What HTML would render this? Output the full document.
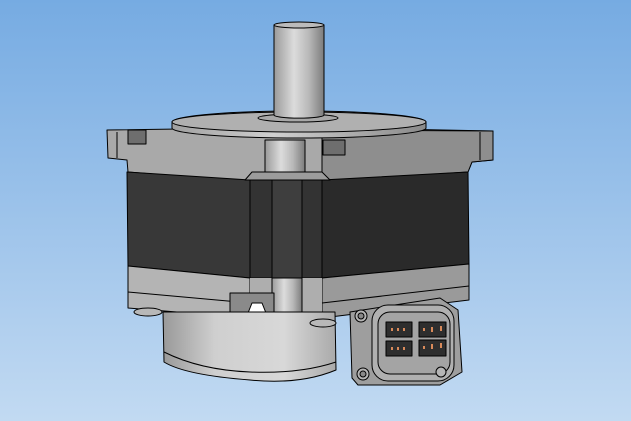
<!DOCTYPE html>
<html><head><style>
html,body{margin:0;padding:0;width:631px;height:421px;overflow:hidden}
body{background:#9cc4ec}
svg{display:block}
</style></head><body>
<svg width="631" height="421" viewBox="0 0 631 421" xmlns="http://www.w3.org/2000/svg">
<defs>
<linearGradient id="bg" x1="0" y1="0" x2="0" y2="1"><stop offset="0" stop-color="#76abe2"/><stop offset="1" stop-color="#c2daf2"/></linearGradient>
<linearGradient id="cyl" x1="0" x2="1"><stop offset="0" stop-color="#999"/><stop offset="0.3" stop-color="#cfcfcf"/><stop offset="0.7" stop-color="#d8d8d8"/><stop offset="1" stop-color="#aaa"/></linearGradient>
<linearGradient id="shaft" x1="0" x2="1"><stop offset="0" stop-color="#9a9a9a"/><stop offset="0.4" stop-color="#dcdcdc"/><stop offset="0.7" stop-color="#b8b8b8"/><stop offset="1" stop-color="#7c7c7c"/></linearGradient>
<linearGradient id="disk" x1="0" x2="1"><stop offset="0" stop-color="#a0a0a0"/><stop offset="0.4" stop-color="#d0d0d0"/><stop offset="1" stop-color="#8a8a8a"/></linearGradient>
</defs>
<rect width="631" height="421" fill="url(#bg)"/>
<g stroke="#000" stroke-width="1" stroke-linejoin="round">
<polygon points="107,130 250,128 340,128 493,131 493,160 472,162 468,172 322,182 250,182 128,172 127,160 108,158" fill="#a9a9a9"/>
<polygon points="322,130 493,131 493,160 472,162 468,172 322,182" fill="#8e8e8e"/>
<line x1="117" y1="132" x2="117" y2="158"/><line x1="480" y1="132" x2="480" y2="160"/>
<rect x="128" y="130" width="18" height="14" fill="#6e6e6e"/>
<rect x="323" y="140" width="22" height="15" fill="#6e6e6e"/>
<polygon points="127,172 250,180 250,278 128,266" fill="#383838"/>
<polygon points="322,180 468,172 469,264 322,278" fill="#2a2a2a"/>
<polygon points="250,180 322,180 322,278 250,278" fill="#333"/>
<rect x="272" y="180" width="30" height="98" fill="#3e3e3e"/>
<line x1="272" y1="180" x2="272" y2="296"/><line x1="302" y1="180" x2="302" y2="296"/>
<polygon points="252,172 265,172 322,172 330,180 245,180" fill="#9c9c9c"/>
<rect x="265" y="140" width="40" height="32" fill="url(#shaft)"/>
<polygon points="128,266 250,278 250,318 128,308" fill="#b4b4b4"/>
<polygon points="322,278 469,264 469,300 322,318" fill="#9a9a9a"/>
<rect x="250" y="278" width="72" height="40" fill="#aeaeae" stroke="none"/>
<rect x="272" y="278" width="30" height="40" fill="url(#shaft)"/>
<line x1="128" y1="292" x2="250" y2="303"/><line x1="322" y1="303" x2="469" y2="286"/>
<rect x="230" y="293" width="44" height="25" fill="#8a8a8a"/>
<polygon points="246,318 252,303 262,303 268,318" fill="#fff"/>
<path d="M172,122 A127,11 0 0 1 426,122 L426,128 A127,10 0 0 1 172,128 Z" fill="url(#disk)"/>
<ellipse cx="299" cy="122" rx="127" ry="10" fill="#b0b0b0"/>
<ellipse cx="298" cy="118" rx="40" ry="4" fill="#a8a8a8"/>
<path d="M274,25 L274,115 A24,3 0 0 0 324,115 L324,25 Z" fill="url(#shaft)"/>
<ellipse cx="299" cy="25" rx="25" ry="3" fill="#bbb"/>
<path d="M163,312 L335,312 L336,370 Q300,385 250,380 Q185,375 164,362 Z" fill="url(#cyl)"/>
<path d="M164,352 Q200,370 250,372 Q300,374 336,362" fill="none"/>
<ellipse cx="148" cy="312" rx="14" ry="4" fill="#b8b8b8"/>
<ellipse cx="323" cy="323" rx="13" ry="4" fill="#b8b8b8"/>
<polygon points="350,312 440,298 458,310 462,372 440,385 358,385 352,378" fill="#9e9e9e"/>
<rect x="372" y="305" width="82" height="76" rx="16" fill="#b0b0b0"/>
<rect x="378" y="312" width="72" height="62" rx="12" fill="#a4a4a4"/>
<circle cx="361" cy="316" r="6" fill="#b5b5b5"/><circle cx="361" cy="316" r="3" fill="#888"/>
<circle cx="363" cy="374" r="6" fill="#b5b5b5"/><circle cx="363" cy="374" r="3" fill="#888"/>
<circle cx="441" cy="372" r="5" fill="#b5b5b5"/>
<rect x="386" y="322" width="26" height="15" fill="#2e2e2e"/>
<rect x="386" y="341" width="26" height="15" fill="#2e2e2e"/>
<rect x="419" y="322" width="27" height="15" fill="#2e2e2e"/>
<rect x="419" y="340" width="27" height="16" fill="#2e2e2e"/>
</g>
<g fill="#d98a5a">
<rect x="391" y="328" width="2" height="3"/><rect x="397" y="328" width="2" height="3"/><rect x="403" y="328" width="2" height="3"/>
<rect x="391" y="347" width="2" height="3"/><rect x="397" y="347" width="2" height="3"/><rect x="403" y="347" width="2" height="3"/>
<rect x="423" y="328" width="2" height="3"/><rect x="431" y="327" width="2" height="5"/><rect x="440" y="326" width="2" height="5"/>
<rect x="423" y="346" width="2" height="3"/><rect x="431" y="344" width="2" height="5"/><rect x="440" y="343" width="2" height="5"/>
</g>
</svg>
</body></html>
